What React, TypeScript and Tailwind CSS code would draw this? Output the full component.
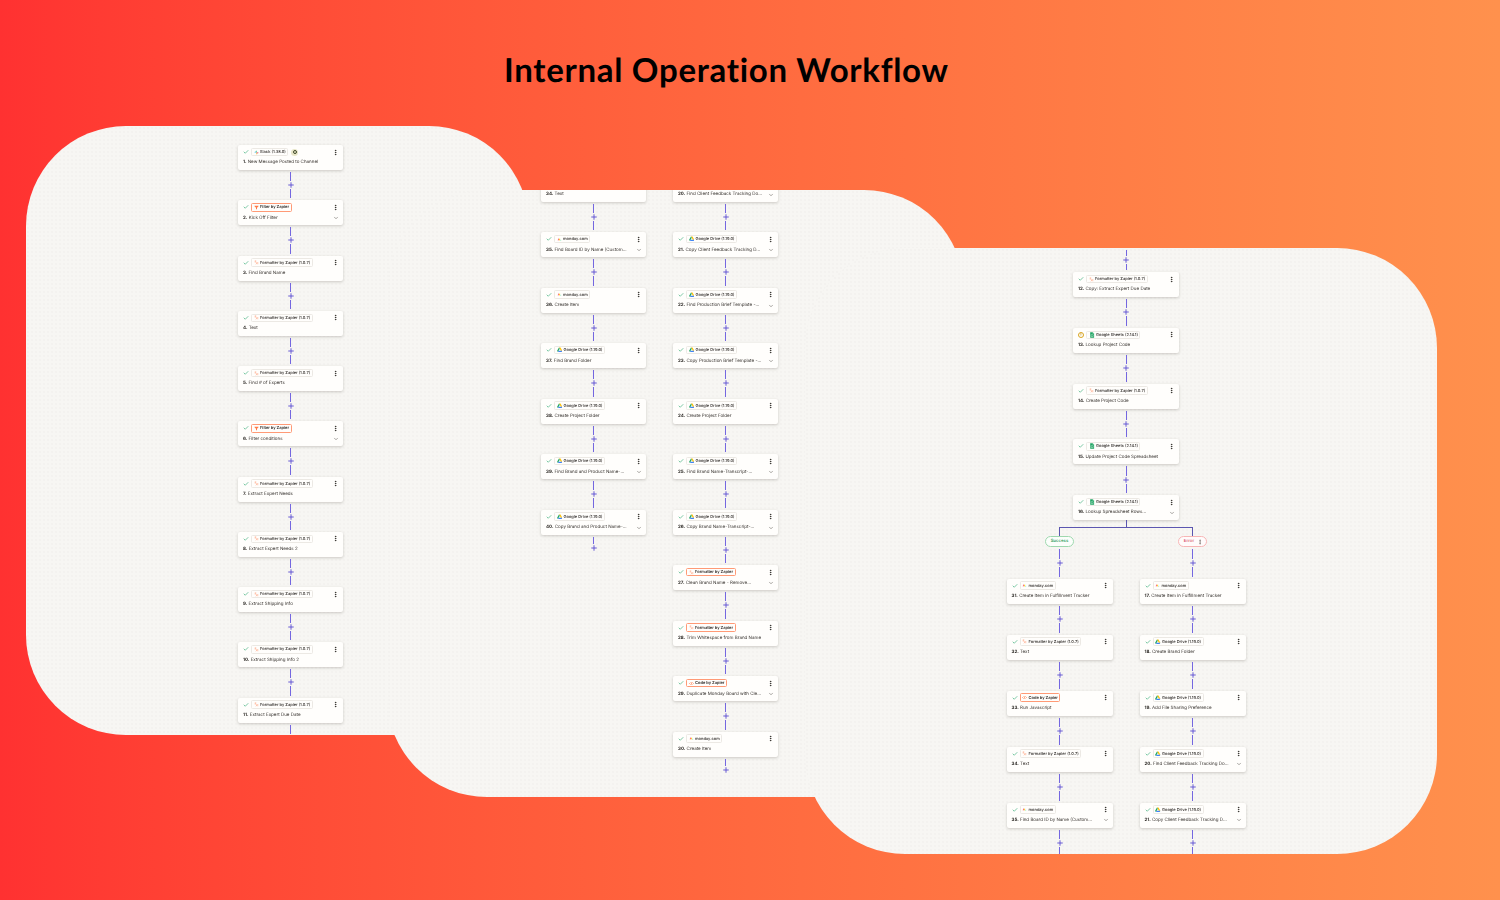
import { Check, ChevronDown, EllipsisVertical, Plus } from 'lucide-react';
import type { ReactNode } from 'react';

type AppKey = 'slack' | 'filter' | 'fmt' | 'fmtBox' | 'code' | 'monday' | 'drive' | 'sheets';

interface StepData {
  n: number;
  title: string;
  app: AppKey;
  more?: boolean;
  warn?: boolean;
  badge?: boolean;
}

const SlackIcon = () => (
  <svg viewBox="0 0 10 10" className="h-[5px] w-[5px]">
    <rect x="1" y="3.6" width="4" height="1.6" rx="0.8" fill="#36c5f0" />
    <rect x="3.6" y="1" width="1.6" height="4" rx="0.8" fill="#2eb67d" />
    <rect x="5" y="4.8" width="4" height="1.6" rx="0.8" fill="#e01e5a" />
    <rect x="4.8" y="5" width="1.6" height="4" rx="0.8" fill="#ecb22e" />
  </svg>
);

const FilterIcon = () => (
  <svg viewBox="0 0 10 10" className="h-[5px] w-[5px]">
    <path d="M1 1.5h8v1L6 5.5V9L4 8V5.5L1 2.5z" fill="#ff7a45" />
  </svg>
);

const FormatterIcon = () => (
  <svg viewBox="0 0 10 10" className="h-[5px] w-[5px]" fill="none" stroke="#ff8a5c" strokeWidth="1.3">
    <path d="M1.5 2h3M1.5 4h2M4 8.5l4-4M5 5h1M7 7.5h1.5" />
  </svg>
);

const CodeIcon = () => (
  <svg viewBox="0 0 10 10" className="h-[5px] w-[5px]" fill="none" stroke="#ff7a45" strokeWidth="1.3">
    <path d="M3 3L1 5l2 2M7 3l2 2-2 2M5.8 2.2L4.2 7.8" />
  </svg>
);

const MondayIcon = () => (
  <svg viewBox="0 0 10 10" className="h-[5px] w-[5px]">
    <rect x="2" y="3" width="1.5" height="4" rx="0.7" transform="rotate(20 2.7 5)" fill="#f6405f" />
    <rect x="4.4" y="3" width="1.5" height="4" rx="0.7" transform="rotate(20 5.1 5)" fill="#ffcb00" />
    <circle cx="7.6" cy="6.2" r="0.9" fill="#00ca72" />
  </svg>
);

const DriveIcon = () => (
  <svg viewBox="0 0 10 10" className="h-[5.5px] w-[5.5px]">
    <path d="M3.6 1h2.8L9.8 7H7L3.6 1z" fill="#ffc107" />
    <path d="M3.6 1L.2 7l1.4 2.3L5 3.4 3.6 1z" fill="#1fa463" />
    <path d="M1.6 9.3h6.8L9.8 7H3L1.6 9.3z" fill="#4285f4" />
  </svg>
);

const SheetsIcon = () => (
  <svg viewBox="0 0 10 10" className="h-[6px] w-[6px]">
    <path d="M2 .5h4l2.5 2.5v6.5H2z" fill="#1fa463" />
    <path d="M6 .5L8.5 3H6z" fill="#8ed1b1" />
    <path d="M3.5 4.5h3.5v3H3.5z" fill="none" stroke="#fff" strokeWidth="0.6" />
  </svg>
);

const apps: Record<AppKey, { label: string; icon: ReactNode; boxed?: boolean }> = {
  slack: { label: 'Slack (1.38.0)', icon: <SlackIcon /> },
  filter: { label: 'Filter by Zapier', icon: <FilterIcon />, boxed: true },
  fmt: { label: 'Formatter by Zapier (1.0.7)', icon: <FormatterIcon /> },
  fmtBox: { label: 'Formatter by Zapier', icon: <FormatterIcon />, boxed: true },
  code: { label: 'Code by Zapier', icon: <CodeIcon />, boxed: true },
  monday: { label: 'monday.com', icon: <MondayIcon /> },
  drive: { label: 'Google Drive (1.19.0)', icon: <DriveIcon /> },
  sheets: { label: 'Google Sheets (2.14.1)', icon: <SheetsIcon /> },
};

const firstPanel: StepData[] = [
  { n: 1, title: 'New Message Posted to Channel', app: 'slack', badge: true },
  { n: 2, title: 'Kick Off Filter', app: 'filter', more: true },
  { n: 3, title: 'Find Brand Name', app: 'fmt' },
  { n: 4, title: 'Text', app: 'fmt' },
  { n: 5, title: 'Find # of Experts', app: 'fmt' },
  { n: 6, title: 'Filter conditions', app: 'filter', more: true },
  { n: 7, title: 'Extract Expert Needs', app: 'fmt' },
  { n: 8, title: 'Extract Expert Needs 2', app: 'fmt' },
  { n: 9, title: 'Extract Shipping Info', app: 'fmt' },
  { n: 10, title: 'Extract Shipping Info 2', app: 'fmt' },
  { n: 11, title: 'Extract Expert Due Date', app: 'fmt' },
];

const middleLeft: StepData[] = [
  { n: 34, title: 'Text', app: 'fmt' },
  { n: 35, title: 'Find Board ID by Name (Custom...', app: 'monday', more: true },
  { n: 36, title: 'Create Item', app: 'monday' },
  { n: 37, title: 'Find Brand Folder', app: 'drive' },
  { n: 38, title: 'Create Project Folder', app: 'drive' },
  { n: 39, title: 'Find Brand and Product Name-...', app: 'drive', more: true },
  { n: 40, title: 'Copy Brand and Product Name-...', app: 'drive', more: true },
];

const middleRight: StepData[] = [
  { n: 20, title: 'Find Client Feedback Tracking Do...', app: 'drive', more: true },
  { n: 21, title: 'Copy Client Feedback Tracking D...', app: 'drive', more: true },
  { n: 22, title: 'Find Production Brief Template -...', app: 'drive', more: true },
  { n: 23, title: 'Copy Production Brief Template -...', app: 'drive', more: true },
  { n: 24, title: 'Create Project Folder', app: 'drive' },
  { n: 25, title: 'Find Brand Name-Transcript-...', app: 'drive', more: true },
  { n: 26, title: 'Copy Brand Name-Transcript-...', app: 'drive', more: true },
  { n: 27, title: 'Clean Brand Name - Remove...', app: 'fmtBox', more: true },
  { n: 28, title: 'Trim Whitespace from Brand Name', app: 'fmtBox' },
  { n: 29, title: 'Duplicate Monday Board with Cle...', app: 'code', more: true },
  { n: 30, title: 'Create Item', app: 'monday' },
];

const lastMain: StepData[] = [
  { n: 12, title: 'Copy: Extract Expert Due Date', app: 'fmt' },
  { n: 13, title: 'Lookup Project Code', app: 'sheets', warn: true },
  { n: 14, title: 'Create Project Code', app: 'fmt' },
  { n: 15, title: 'Update Project Code Spreadsheet', app: 'sheets' },
  { n: 16, title: 'Lookup Spreadsheet Rows...', app: 'sheets', more: true },
];

const successBranch: StepData[] = [
  { n: 31, title: 'Create Item in Fulfillment Tracker', app: 'monday' },
  { n: 32, title: 'Text', app: 'fmt' },
  { n: 33, title: 'Run Javascript', app: 'code' },
  { n: 34, title: 'Text', app: 'fmt' },
  { n: 35, title: 'Find Board ID by Name (Custom...', app: 'monday', more: true },
];

const errorBranch: StepData[] = [
  { n: 17, title: 'Create Item in Fulfillment Tracker', app: 'monday' },
  { n: 18, title: 'Create Brand Folder', app: 'drive' },
  { n: 19, title: 'Add File Sharing Preference', app: 'drive' },
  { n: 20, title: 'Find Client Feedback Tracking Do...', app: 'drive', more: true },
  { n: 21, title: 'Copy Client Feedback Tracking D...', app: 'drive', more: true },
];

function Link({ height }: { height: string }) {
  return (
    <div className={`flex shrink-0 flex-col items-center py-[2px] ${height}`}>
      <div className="w-px flex-1 bg-[#7467e0]" />
      <Plus size={8} strokeWidth={2.8} className="text-[#5d50d2]" />
      <div className="w-px flex-1 bg-[#7467e0]" />
    </div>
  );
}

function LastLink({ height }: { height: string }) {
  return (
    <div className={`flex shrink-0 flex-col items-center pt-[2px] ${height}`}>
      <div className="w-px flex-1 bg-[#7467e0]" />
      <Plus size={8} strokeWidth={2.8} className="text-[#5d50d2]" />
    </div>
  );
}

function Step({ step, width }: { step: StepData; width: string }) {
  const app = apps[step.app];
  return (
    <div className={`flex h-[25px] shrink-0 flex-col rounded-[2px] bg-[#fffefc] px-[5px] pt-[2.5px] shadow-[0_1px_3px_rgba(50,40,30,0.22)] ${width}`}>
      <div className="flex h-[9px] items-center">
        {step.warn ? (
          <span className="flex h-[6px] w-[6px] items-center justify-center rounded-full border-[0.7px] border-[#d9a520] text-[4px] font-bold leading-none text-[#c48f10]">!</span>
        ) : (
          <Check size={6} strokeWidth={3} className="text-[#52b788]" />
        )}
        <span
          className={`ml-[2px] flex h-[8.5px] items-center gap-[1.5px] rounded-[1.5px] px-[1.5px] text-[4px] leading-none text-[#2f2b28] ${
            app.boxed ? 'border-[0.8px] border-[#ff9a76] font-semibold' : 'border-[0.5px] border-[#ece9e4] font-medium'
          }`}
        >
          {app.icon}
          <span className="whitespace-nowrap">{app.label}</span>
        </span>
        {step.badge && (
          <span className="ml-[3px] flex h-[7px] w-[7px] items-center justify-center rounded-full bg-[#e8e6c8]">
            <span className="h-[4px] w-[4px] rounded-full border-[1px] border-[#3f4a2a]" />
          </span>
        )}
        <EllipsisVertical size={7} strokeWidth={3} className="ml-auto -mr-[1px] text-[#2d2a26]" />
      </div>
      <div className="mt-[3.7px] flex h-[7px] items-center justify-between text-[4.5px] leading-none text-[#3a3632]">
        <span className="whitespace-nowrap">
          <b className="font-bold text-[#2d2a26]">{step.n}.</b> {step.title}
        </span>
        {step.more && <ChevronDown size={6} strokeWidth={2} className="-mt-[1.5px] -mr-[1px] shrink-0 text-[#55514b]" />}
      </div>
    </div>
  );
}

function Flow({ steps, width, link }: { steps: StepData[]; width: string; link: string }) {
  return (
    <div className="flex flex-col items-center">
      {steps.map((step, i) => (
        <div key={step.n} className="flex flex-col items-center">
          {i > 0 && <Link height={link} />}
          <Step step={step} width={width} />
        </div>
      ))}
    </div>
  );
}

const sheet =
  'absolute overflow-hidden rounded-[100px] bg-[#f7f6f3] bg-[radial-gradient(#eeede9_0.6px,transparent_0.8px)] bg-[size:4px_4px]';

export default function App() {
  return (
    <div className="relative h-[900px] w-[1500px] overflow-hidden bg-linear-to-r from-[#ff3131] to-[#ff914d] font-['Inter',sans-serif] [text-rendering:geometricPrecision]">
      <h1 className="pt-[48px] pl-[504px] font-['Lato',sans-serif] text-[33px] leading-[44px] font-bold tracking-[0.7px] whitespace-nowrap text-black">
        Internal Operation Workflow
      </h1>

      <div className={`${sheet} top-[126px] left-[26px] h-[609px] w-[503px] pt-[19px] pl-[212px]`}>
        <div className="flex w-[105px] flex-col items-center blur-[0.3px]">
          <Flow steps={firstPanel} width="w-[105px]" link="h-[30.25px]" />
          <Link height="h-[30px]" />
        </div>
      </div>

      <div className={`${sheet} top-[190px] left-[387px] h-[607px] w-[577px]`}>
        <div className="flex items-start gap-[27px] pl-[154px] blur-[0.3px]">
          <div className="-mt-[13.3px] flex flex-col items-center">
            <Flow steps={middleLeft} width="w-[105px]" link="h-[30.5px]" />
            <LastLink height="h-[17px]" />
          </div>
          <div className="-mt-[13.3px] flex flex-col items-center">
            <Flow steps={middleRight} width="w-[105px]" link="h-[30.5px]" />
            <LastLink height="h-[17px]" />
          </div>
        </div>
      </div>

      <div className={`${sheet} top-[248px] left-[805px] h-[606px] w-[632px] pl-[201.5px]`}>
        <div className="flex w-[239px] flex-col items-center blur-[0.3px]">
          <Link height="h-[24px]" />
          <Flow steps={lastMain} width="w-[106px]" link="h-[30.75px]" />
          <div className="h-[7px] w-px bg-[#5b56b0]" />
          <div className="w-[134px] border-t border-[#5b56b0]" />
          <div className="flex w-full justify-between">
            <div className="flex flex-col items-center">
              <div className="h-[8px] w-px bg-[#5b56b0]" />
              <span className="flex h-[11px] w-[29px] items-center justify-center rounded-full border border-[#9ed8ae] bg-[#fbfefb] pt-[0.5px] text-[4.3px] leading-none font-semibold text-[#2f9a5c]">
                Success
              </span>
              <Link height="h-[31.5px]" />
              <Flow steps={successBranch} width="w-[106px]" link="h-[31px]" />
              <Link height="h-[30px]" />
            </div>
            <div className="flex flex-col items-center">
              <div className="h-[8px] w-px bg-[#5b56b0]" />
              <span className="flex h-[11px] w-[29px] items-center justify-center gap-[3px] rounded-full border border-[#f7b5b5] bg-[#fffbfb] pt-[0.5px] text-[4.3px] leading-none font-semibold text-[#d9536a]">
                Error
                <EllipsisVertical size={6} strokeWidth={3} className="-mr-[2px] text-[#77706a]" />
              </span>
              <Link height="h-[31.5px]" />
              <Flow steps={errorBranch} width="w-[106px]" link="h-[31px]" />
              <Link height="h-[30px]" />
            </div>
          </div>
        </div>
      </div>
    </div>
  );
}
